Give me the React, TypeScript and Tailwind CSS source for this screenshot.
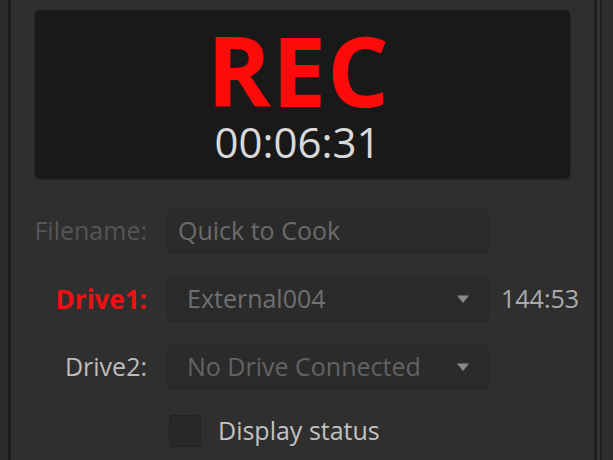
import { useState } from "react";

const Caret = () => (
  <svg width="14" height="10" viewBox="0 0 14 10" className="shrink-0">
    <path d="M1 1.5 L13 1.5 L7 9 Z" fill="#8a8a8a" />
  </svg>
);

const App = () => {
  const [showStatus, setShowStatus] = useState(false);

  return (
    <div
      className="flex h-[460px] w-[613px] overflow-hidden bg-[#2c2c2c]"
      style={{ fontFamily: "'Open Sans', 'Noto Sans', sans-serif" }}
    >
      <div className="w-[8px] shrink-0 bg-[#2b2b2b]" />
      <div className="w-[3px] shrink-0 bg-[#1c1c1c]" />

      {/* main panel */}
      <div className="flex w-[583px] shrink-0 flex-col bg-[#2f2f2f] px-[24px] pt-[10px]">
        {/* record display */}
        <div className="flex h-[168px] flex-col items-center rounded-[5px] bg-[#191919] shadow-[0_1px_2px_rgba(0,0,0,0.5)]">
          <div className="mt-[18px] h-[82px] pr-[8px] text-[97px] font-bold leading-[82px] tracking-[1px] text-[#ff0a0a]">
            REC
          </div>
          <div className="mt-[12px] h-[40px] pr-[10px] text-[42px] leading-[40px] text-[#d9d9d9]">
            00:06:31
          </div>
        </div>

        {/* form */}
        <div className="ml-[-24px] mr-[-24px] mt-[30px] flex flex-col gap-[22px] text-[25px]">
          <div className="flex items-center">
            <span className="w-[136px] shrink-0 text-right text-[#555555]">Filename:</span>
            <div className="ml-[20px] flex h-[46px] w-[322px] shrink-0 items-center rounded-[5px] border border-[#282828] bg-[#2b2b2b] px-[10px] text-[#6a6a6a]">
              Quick to Cook
            </div>
          </div>

          <div className="flex items-center">
            <span className="w-[136px] shrink-0 text-right text-[26px] font-bold text-[#ee1111]">Drive1:</span>
            <div className="ml-[20px] flex h-[46px] w-[322px] shrink-0 items-center justify-between rounded-[5px] border border-[#282828] bg-[#2b2b2b] pl-[19px] pr-[18px] text-[#707070]">
              <span>External004</span>
              <Caret />
            </div>
            <span className="ml-[12px] shrink-0 text-[#ababab]">144:53</span>
          </div>

          <div className="flex items-center">
            <span className="w-[136px] shrink-0 text-right text-[#bdbdbd]">Drive2:</span>
            <div className="ml-[20px] flex h-[46px] w-[322px] shrink-0 items-center justify-between rounded-[5px] border border-[#282828] bg-[#2b2b2b] pl-[19px] pr-[18px] text-[#636363]">
              <span>No Drive Connected</span>
              <Caret />
            </div>
          </div>

          <div className="flex items-center">
            <button
              onClick={() => setShowStatus(!showStatus)}
              className="ml-[158px] h-[32px] w-[32px] shrink-0 rounded-[4px] border border-[#222222] bg-[#292929]"
            />
            <span className="ml-[17px] text-[#c2c2c2]">Display status</span>
          </div>
        </div>
      </div>

      <div className="w-[3px] shrink-0 bg-[#1d1d1d]" />
      <div className="w-[3px] shrink-0 bg-[#333333]" />
      <div className="w-[2px] shrink-0 bg-[#1f1f1f]" />
      <div className="flex-1 bg-[#2e2e2e]" />
    </div>
  );
};

export default App;
